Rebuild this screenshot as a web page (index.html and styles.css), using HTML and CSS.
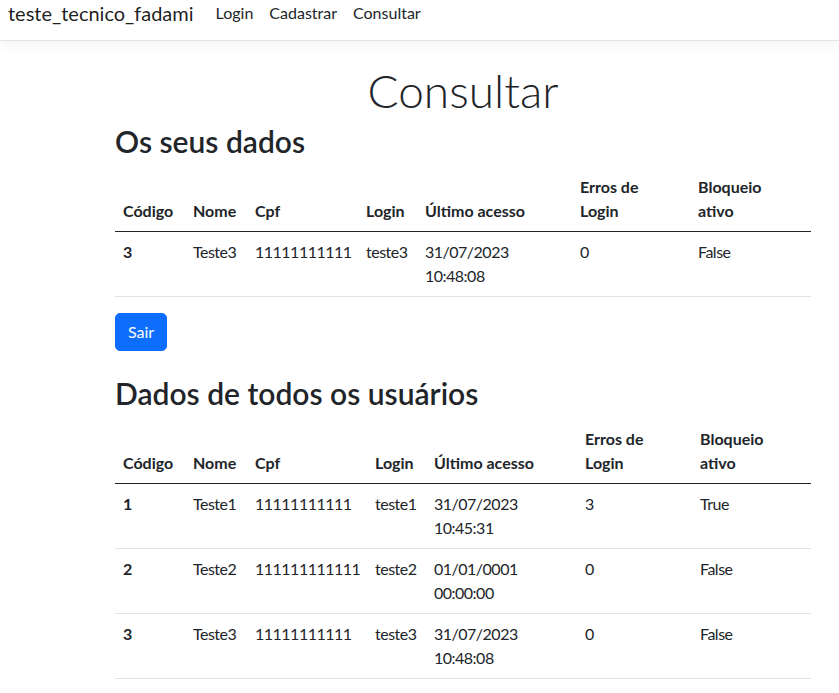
FILE: index.html
```html
<!DOCTYPE html>
<html lang="pt-BR">
<head>
<meta charset="utf-8">
<title>Consultar - teste_tecnico_fadami</title>
<link rel="stylesheet" href="styles.css">
</head>
<body>
<header class="navbar">
  <a class="brand" href="#">teste_tecnico_fadami</a>
  <nav class="nav">
    <a class="nav-link" href="#">Login</a>
    <a class="nav-link" href="#">Cadastrar</a>
    <a class="nav-link" href="#">Consultar</a>
  </nav>
</header>
<main class="container">
  <h1 class="display">Consultar</h1>
  <h2 class="section-title">Os seus dados</h2>
  <table class="table t1">
    <colgroup>
      <col class="c1"><col class="c2"><col class="c3"><col class="c4"><col class="c5"><col class="c6"><col class="c7">
    </colgroup>
    <thead>
      <tr><th>Código</th><th>Nome</th><th>Cpf</th><th>Login</th><th>Último acesso</th><th>Erros de<br>Login</th><th>Bloqueio<br>ativo</th></tr>
    </thead>
    <tbody>
      <tr><th>3</th><td>Teste3</td><td>11111111111</td><td>teste3</td><td>31/07/2023 10:48:08</td><td>0</td><td>False</td></tr>
    </tbody>
  </table>
  <button class="btn" type="button">Sair</button>
  <h2 class="section-title second">Dados de todos os usuários</h2>
  <table class="table t2">
    <colgroup>
      <col class="c1"><col class="c2"><col class="c3"><col class="c4"><col class="c5"><col class="c6"><col class="c7">
    </colgroup>
    <thead>
      <tr><th>Código</th><th>Nome</th><th>Cpf</th><th>Login</th><th>Último acesso</th><th>Erros de<br>Login</th><th>Bloqueio<br>ativo</th></tr>
    </thead>
    <tbody>
      <tr><th>1</th><td>Teste1</td><td>11111111111</td><td>teste1</td><td>31/07/2023 10:45:31</td><td>3</td><td>True</td></tr>
      <tr><th>2</th><td>Teste2</td><td>111111111111</td><td>teste2</td><td>01/01/0001 00:00:00</td><td>0</td><td>False</td></tr>
      <tr><th>3</th><td>Teste3</td><td>11111111111</td><td>teste3</td><td>31/07/2023 10:48:08</td><td>0</td><td>False</td></tr>
    </tbody>
  </table>
</main>
</body>
</html>
```
FILE: styles.css
```css
html, body {
  margin: 0;
  padding: 0;
  overflow: hidden;
}
body {
  font-family: "Segoe UI", Lato, "Open Sans", sans-serif;
  font-size: 16px;
  line-height: 1.5;
  color: #212529;
  background: #fff;
}
a {
  text-decoration: none;
}

/* navbar */
.navbar {
  display: flex;
  align-items: flex-start;
  height: 40px;
  padding-left: 8px;
  border-bottom: 1px solid #e5e5e5;
  box-shadow: 0 4px 12px rgba(0, 0, 0, 0.05);
}
.brand {
  font-size: 20px;
  line-height: 30px;
  margin-top: -2px;
  margin-right: 14px;
  color: rgba(0, 0, 0, 0.9);
  white-space: nowrap;
}
.nav {
  display: flex;
}
.nav-link {
  padding: 0 8px;
  line-height: 24px;
  margin-top: 1px;
  color: #212529;
}

/* content */
.container {
  width: 696px;
  padding-top: 16px;
  margin-left: 115px;
}
.display {
  margin: 4px 0 4px;
  text-align: center;
  font-size: 46px;
  font-weight: 300;
  line-height: 59px;
}
.section-title {
  margin: 0 0 8px;
  font-size: 30px;
  font-weight: 600;
  line-height: 35px;
}
.section-title.second {
  margin-top: 25px;
}

/* tables */
.table {
  width: 696px;
  table-layout: fixed;
  border-collapse: collapse;
  margin-bottom: 16px;
}
.table th,
.table td {
  padding: 8px;
  text-align: left;
  vertical-align: top;
  border-bottom: 1px solid #dee2e6;
}
.table td {
  letter-spacing: -0.5px;
}
.table th {
  font-weight: 700;
}
.table thead th {
  vertical-align: bottom;
  border-bottom: 1px solid #212529;
}
.t1 .c1 { width: 70px; }
.t1 .c2 { width: 62px; }
.t1 .c3 { width: 111px; }
.t1 .c4 { width: 59px; }
.t1 .c5 { width: 155px; }
.t1 .c6 { width: 118px; }
.t1 .c7 { width: 121px; }
.t2 .c1 { width: 70px; }
.t2 .c2 { width: 62px; }
.t2 .c3 { width: 120px; }
.t2 .c4 { width: 59px; }
.t2 .c5 { width: 151px; }
.t2 .c6 { width: 115px; }
.t2 .c7 { width: 119px; }

/* button */
.btn {
  display: block;
  height: 38px;
  padding: 6px 12px;
  font-family: inherit;
  font-size: 16px;
  line-height: 24px;
  color: #fff;
  background: #0d6efd;
  border: 1px solid #0d6efd;
  border-radius: 5px;
}
```
